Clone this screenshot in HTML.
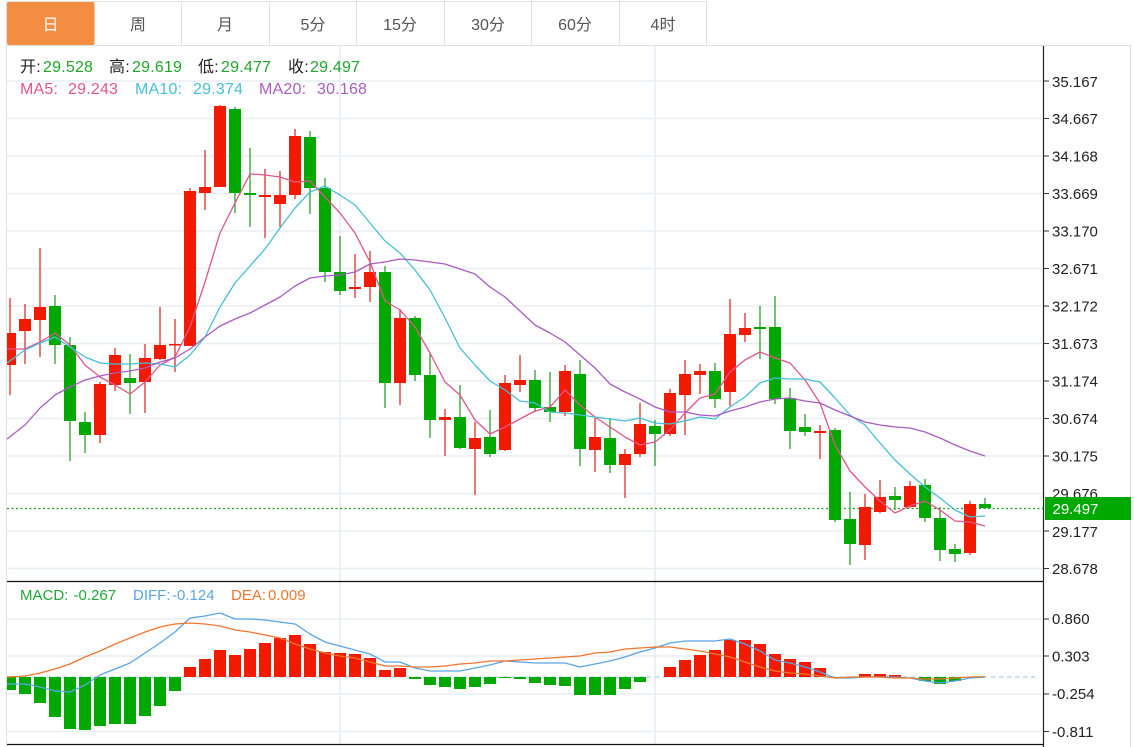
<!DOCTYPE html>
<html lang="zh"><head><meta charset="utf-8"><title>K线</title>
<style>
html,body{margin:0;padding:0;background:#fff;width:1134px;height:747px;overflow:hidden}
svg{display:block;font-family:"Liberation Sans","Noto Sans CJK SC",sans-serif}
</style></head><body>
<svg width="1134" height="747" viewBox="0 0 1134 747" xmlns="http://www.w3.org/2000/svg">
<rect width="1134" height="747" fill="#fff"/>
<!-- tabs / frame -->
<path d="M7 1.5H706.5V45M7 45.5H1130.5V747M6.5 1V747" fill="none" stroke="#e0e0e0" stroke-width="1"/>
<path d="M181.5 2V45M269.5 2V45M356.5 2V45M444.5 2V45M531.5 2V45M619.5 2V45" stroke="#e0e0e0" stroke-width="1"/>
<rect x="7" y="2" width="87.5" height="43" rx="2" fill="#f28d42"/>
<g font-size="16" fill="#555" text-anchor="middle">
<text x="50.5" y="30" fill="#fff">日</text><text x="138" y="30">周</text><text x="225" y="30">月</text><text x="313" y="30">5分</text><text x="400" y="30">15分</text><text x="488" y="30">30分</text><text x="575" y="30">60分</text><text x="663" y="30">4时</text>
</g>
<!-- grid -->
<path d="M7 81H1043M7 118.5H1043M7 156H1043M7 193.5H1043M7 231H1043M7 268.5H1043M7 306H1043M7 343.5H1043M7 381H1043M7 418.5H1043M7 456H1043M7 493.5H1043M7 531H1043M7 568.5H1043M7 619H1043M7 656H1043M7 694H1043M7 731.5H1043" stroke="#e8eef3" stroke-width="1.4" fill="none"/>
<path d="M340 46V581M655 46V581M340 582V744M655 582V744" stroke="#e6edf3" stroke-width="1.6" fill="none"/>
<!-- last price line -->
<path d="M7 508.5H1043" stroke="#18a018" stroke-width="1.2" stroke-dasharray="2 2.5" fill="none"/>
<!-- wicks -->
<g fill="none" stroke-width="1.3">
<path stroke="#e0322a" d="M10 298V395M25 304V364M40 248V357M100 382V443M115 348V391M145 344V413M160 307V360M175 319V372M190 188V346M205 150V210M220 105V108M265 169V238M280 171V227M295 129V199M355 254V298M370 251V302M400 309V405M445 409V456M475 422V495M505 375V451M520 355V392M565 365V416M595 418V472M625 449V498M640 403V457M670 389V436M685 360V435M700 364V394M730 299V406M745 313V342M820 425V459M865 494V560M880 480V513M910 481V508M970 501V555"/>
<path stroke="#2ca02c" d="M55 295V364M70 337V461M85 412V453M130 354V414M235 107V213M250 148V227M310 131V214M325 178V282M340 236V295M385 266V408M415 316V381M430 353V438M460 385V449M490 410V457M535 370V412M550 372V422M580 360V466M610 418V473M655 420V466M715 363V408M760 306V359M775 296V404M790 388V449M805 414V436M835 428V522M850 492V565M895 487V510M925 479V522M940 507V561M955 544V562M985 498V509"/>
</g>
<!-- bodies -->
<path fill="#f21a00" d="M7 333H16V365H7ZM19 319H31V331H19ZM34 307H46V320H34ZM94 384H106V435H94ZM109 355H121V385H109ZM139 358H151V382H139ZM154 345H166V359H154ZM169 344H181V345.5H169ZM184 191H196V346H184ZM199 187H211V193H199ZM214 106H226V187H214ZM259 195H271V197H259ZM274 195H286V204H274ZM289 136H301V195H289ZM349 287H361V289H349ZM364 272H376V287H364ZM394 318H406V383H394ZM439 417H451V420H439ZM469 438H481V449H469ZM499 383H511V450H499ZM514 380H526V385H514ZM559 371H571V412H559ZM589 437H601V450H589ZM619 454H631V465H619ZM634 424H646V454H634ZM664 393H676V434H664ZM679 374H691V395H679ZM694 371H706V375H694ZM724 334H736V392H724ZM739 328H751V335H739ZM814 431H826V433H814ZM859 507H871V545H859ZM874 497H886V512H874ZM904 486H916V507H904ZM964 504H976V553H964Z"/>
<path fill="#00a800" d="M49 306H61V345H49ZM64 345H76V421H64ZM79 422H91V435H79ZM124 378H136V383H124ZM229 109H241V193H229ZM244 193H256V195H244ZM304 137H316V188H304ZM319 188H331V272H319ZM334 272H346V291H334ZM379 272H391V383H379ZM409 318H421V375H409ZM424 375H436V420H424ZM454 417H466V448H454ZM484 437H496V454H484ZM529 380H541V408H529ZM544 407H556V412H544ZM574 374H586V449H574ZM604 438H616V465H604ZM649 426H661V434H649ZM709 371H721V399H709ZM754 327H766V329H754ZM769 327H781V399H769ZM784 398H796V431H784ZM799 427H811V432H799ZM829 430H841V520H829ZM844 519H856V544H844ZM889 496H901V500H889ZM919 485H931V518H919ZM934 518H946V550H934ZM949 549H961V554H949ZM979 504H991V508H979Z"/>
<!-- MA lines -->
<g fill="none" stroke-width="1.3" stroke-linejoin="round">
<polyline stroke="#e0558c" points="7,349 25,349 40,342 55,333 70,345 85,365 100,377 115,385 130,394 145,382 160,365 175,357 190,327 205,282 220,233 235,203 250,174 265,175 280,177 295,182 310,181 325,197 340,213 355,233 370,262 385,301 400,310 415,327 430,353 445,382 460,395 475,420 490,434 505,427 520,419 535,411 550,407 565,390 580,405 595,417 610,427 625,437 640,445 655,442 670,430 685,413 700,398 715,394 730,372 745,360 760,352 775,358 790,363 805,380 820,403 835,445 850,471 865,487 880,501 895,513 910,506 925,501 940,510 955,521 970,522 985,526"/>
<polyline stroke="#45bfd6" points="7,363 25,350 40,343 55,337 70,347 85,357 100,363 115,364 130,364 145,363 160,364 175,367 190,355 205,337 220,307 235,283 250,266 265,249 280,228 295,208 310,192 325,186 340,195 355,205 370,223 385,241 400,253 415,270 430,290 445,318 460,348 475,365 490,381 505,390 520,401 535,403 550,412 565,413 580,415 595,417 610,419 625,421 640,418 655,423 670,424 685,421 700,417 715,419 730,407 745,397 760,383 775,378 790,379 805,379 820,382 835,398 850,415 865,425 880,443 895,460 910,474 925,487 940,498 955,510 970,517 985,516"/>
<polyline stroke="#a95cc2" points="7,439 25,425 40,408 55,395 70,387 85,380 100,376 115,373 130,371 145,368 160,362 175,358 190,349 205,337 220,326 235,319 250,313 265,305 280,297 295,286 310,278 325,276 340,275 355,272 370,264 385,262 400,259 415,260 430,262 445,264 460,269 475,274 490,287 505,297 520,311 535,325 550,333 565,342 580,355 595,368 610,384 625,392 640,399 655,407 670,412 685,412 700,415 715,416 730,411 745,407 760,402 775,399 790,398 805,401 820,403 835,410 850,416 865,422 880,425 895,427 910,428 925,432 940,438 955,445 970,451 985,456"/>
</g>
<!-- legend -->
<g font-size="16" letter-spacing=".2">
<g fill="#222"><text x="20" y="72">开:</text><text x="109" y="72">高:</text><text x="198" y="72">低:</text><text x="288" y="72">收:</text></g>
<g fill="#1fa52a"><text x="43" y="72">29.528</text><text x="132" y="72">29.619</text><text x="221" y="72">29.477</text><text x="310" y="72">29.497</text></g>
<text x="20" y="94" fill="#e0558c">MA5:</text><text x="68" y="94" fill="#e0558c">29.243</text>
<text x="135" y="94" fill="#45bfd6">MA10:</text><text x="193" y="94" fill="#45bfd6">29.374</text>
<text x="259" y="94" fill="#a95cc2">MA20:</text><text x="317" y="94" fill="#a95cc2">30.168</text>
</g>
<!-- separators / axis -->
<path d="M7 581.5H1043M7 744.5H1043" stroke="#111" stroke-width="1.2" fill="none"/>
<path d="M1043.5 46V747" stroke="#222" stroke-width="1.2" fill="none"/>
<path d="M1043 81H1049M1043 118.5H1049M1043 156H1049M1043 193.5H1049M1043 231H1049M1043 268.5H1049M1043 306H1049M1043 343.5H1049M1043 381H1049M1043 418.5H1049M1043 456H1049M1043 531H1049M1043 568.5H1049M1043 619H1049M1043 656H1049M1043 694H1049M1043 731.5H1049" stroke="#333" stroke-width="1" fill="none"/>
<g font-size="15" fill="#222">
<text x="1052" y="87">35.167</text><text x="1052" y="124">34.667</text><text x="1052" y="161.500">34.168</text><text x="1052" y="199">33.669</text><text x="1052" y="236.500">33.170</text><text x="1052" y="274">32.671</text><text x="1052" y="311.500">32.172</text><text x="1052" y="349">31.673</text><text x="1052" y="386.500">31.174</text><text x="1052" y="424">30.674</text><text x="1052" y="461.500">30.175</text><text x="1052" y="499">29.676</text><text x="1052" y="537">29.177</text><text x="1052" y="574">28.678</text>
<text x="1052" y="624">0.860</text><text x="1052" y="661.500">0.303</text><text x="1052" y="699">-0.254</text><text x="1052" y="737">-0.811</text>
</g>
<rect x="1045" y="497" width="86" height="23" fill="#00a800"/>
<text x="1052.5" y="514" font-size="15" fill="#fff">29.497</text>
<!-- MACD -->
<path d="M7 677H1038" stroke="#8ccbe8" stroke-width="1.1" stroke-dasharray="4 4" fill="none"/>
<path fill="#00a800" d="M7 677H16V690H7ZM19 677H31V694H19ZM34 677H46V703H34ZM49 677H61V717H49ZM64 677H76V729H64ZM79 677H91V730H79ZM94 677H106V726H94ZM109 677H121V724H109ZM124 677H136V724H124ZM139 677H151V716H139ZM154 677H166V706H154ZM169 677H181V691H169ZM409 677H421V679H409ZM424 677H436V685H424ZM439 677H451V687H439ZM454 677H466V689H454ZM469 677H481V687H469ZM484 677H496V684H484ZM499 677H511V678H499ZM514 677H526V679H514ZM529 677H541V683H529ZM544 677H556V685H544ZM559 677H571V686H559ZM574 677H586V695H574ZM589 677H601V695H589ZM604 677H616V695H604ZM619 677H631V689H619ZM634 677H646V682H634ZM829 677H841V678H829ZM844 677H856V678H844ZM919 677H931V681H919ZM934 677H946V684H934ZM949 677H961V681H949Z"/>
<path fill="#f21a00" d="M184 667H196V677H184ZM199 659H211V677H199ZM214 650H226V677H214ZM229 655H241V677H229ZM244 649H256V677H244ZM259 643H271V677H259ZM274 638H286V677H274ZM289 635H301V677H289ZM304 644H316V677H304ZM319 652H331V677H319ZM334 653H346V677H334ZM349 654H361V677H349ZM364 658H376V677H364ZM379 670H391V677H379ZM394 668H406V677H394ZM664 667H676V677H664ZM679 660H691V677H679ZM694 655H706V677H694ZM709 650H721V677H709ZM724 640H736V677H724ZM739 640H751V677H739ZM754 644H766V677H754ZM769 654H781V677H769ZM784 659H796V677H784ZM799 662H811V677H799ZM814 668H826V677H814ZM859 674H871V677H859ZM874 674H886V677H874ZM889 675H901V677H889Z"/>
<g fill="none" stroke-width="1.3" stroke-linejoin="round">
<polyline stroke="#5ba5e2" points="7,684 25,684 40,687 55,691 70,692 85,685 100,675 115,669 130,663 145,653 160,643 175,632 190,618 205,616 220,613 235,619 250,619 265,620 280,622 295,624 310,634 325,642 340,646 355,650 370,654 385,662 400,662 415,668 430,671 445,671 460,671 475,668 490,665 505,661 520,662 535,663 550,663 565,663 580,667 595,664 610,661 625,657 640,652 655,648 670,643 685,641 700,641 715,641 730,639 745,644 760,651 775,660 790,663 805,667 820,672 835,678 850,678 865,677 880,677 895,677 910,678 925,681 940,683 955,681 970,678 985,677"/>
<polyline stroke="#f0762e" points="7,677 25,676 40,673 55,669 70,664 85,657 100,651 115,644 130,638 145,632 160,627 175,624 190,623 205,624 220,626 235,630 250,632 265,635 280,638 295,644 310,649 325,653 340,656 355,658 370,662 385,666 400,666 415,667 430,667 445,666 460,664 475,663 490,661 505,661 520,660 535,659 550,658 565,657 580,656 595,653 610,652 625,649 640,648 655,647 670,647 685,649 700,651 715,654 730,657 745,662 760,667 775,671 790,673 805,674 820,676 835,678 850,677 865,677 880,677 895,678 910,678 925,679 940,679 955,678 970,677 985,676.500"/>
</g>
<g font-size="15">
<text x="20" y="600" fill="#22a83a">MACD:</text><text x="73.500" y="600" fill="#22a83a">-0.267</text>
<text x="133" y="600" fill="#5ba5e2">DIFF:</text><text x="172" y="600" fill="#5ba5e2">-0.124</text>
<text x="231" y="600" fill="#f0762e">DEA:</text><text x="268" y="600" fill="#f0762e">0.009</text>
</g>
</svg>
</body></html>
